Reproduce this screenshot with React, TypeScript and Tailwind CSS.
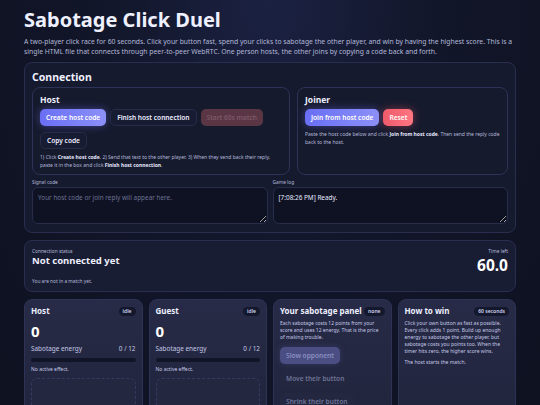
import type { ReactNode } from 'react';

const font = { fontFamily: '"Noto Sans", "Open Sans", sans-serif' };

function Pill({ children }: { children: ReactNode }) {
  return (
    <span className="rounded-full bg-[#14182c] px-[4px] py-[1px] text-[5px] font-semibold leading-[7px] text-[#d3d6f2]">
      {children}
    </span>
  );
}

function PlayerCard({ name }: { name: string }) {
  return (
    <div className="flex h-[120px] flex-col rounded-lg border border-[#2e3355] bg-gradient-to-b from-[#272b47] to-[#20243c] px-[6px] pt-[6px]">
      <div className="flex h-[10px] items-center justify-between">
        <span className="text-[8px] font-bold leading-[10px] text-[#eef0ff]">{name}</span>
        <Pill>idle</Pill>
      </div>
      <div className="mt-[6px] text-[15px] font-bold leading-[18px] text-white">0</div>
      <div className="mt-[4px] flex items-center justify-between text-[6.4px] leading-[9px] text-[#c4c8e6]">
        <span>Sabotage energy</span>
        <span>0 / 12</span>
      </div>
      <div className="mt-[5px] h-[4px] rounded-full bg-[#121527]" />
      <div className="mt-[4px] text-[5px] leading-[7px] text-[#c4c8e6]">No active effect.</div>
      <div className="mt-[5px] h-[40px] rounded-md border border-dashed border-[#353a5e] bg-[#23273f]" />
    </div>
  );
}

export default function App() {
  return (
    <div
      style={font}
      className="min-h-screen bg-[radial-gradient(ellipse_at_50%_0%,#1b2142_0%,#121629_45%,#0e1120_100%)] px-6 pt-[8px] text-[#e8eaff]"
    >
      <h1 className="text-[20px] font-bold leading-[24px] text-[#eef0ff]">Sabotage Click Duel</h1>
      <p className="mt-[5px] text-[6.8px] leading-[10px] text-[#b3b8d8]">
        A two-player click race for 60 seconds. Click your button fast, spend your clicks to sabotage the other player, and win by having the
        highest score. This is a single HTML file that connects through peer-to-peer WebRTC. One person hosts, the other joins by copying a code
        back and forth.
      </p>

      {/* Connection */}
      <div className="mt-[5px] rounded-lg border border-[#292e4f] bg-[#161a2e] px-[7px] pb-[8px] pt-[6px]">
        <h2 className="text-[10.5px] font-bold leading-[16px] text-[#eef0ff]">Connection</h2>
        <div className="mt-[2px] grid grid-cols-[258fr_211fr] gap-[7px]">
          <div className="rounded-lg border border-[#2d3257] bg-[#161a2d] px-[7px] pb-[5px] pt-[5px]">
            <div className="text-[8.5px] font-bold leading-[14px] text-[#eef0ff]">Host</div>
            <div className="mt-[2px] flex flex-wrap gap-x-[4px] gap-y-[6px]">
              <button className="h-[17px] rounded-[5px] bg-gradient-to-r from-[#6a6ef4] to-[#8c90f8] px-[6px] text-[6.6px] font-semibold text-white shadow-[0_0_8px_rgba(110,115,245,0.45)]">
                Create host code
              </button>
              <button className="h-[17px] rounded-[5px] border border-[#262b48] bg-[#181c33] px-[6px] text-[6.6px] font-semibold text-[#eceeff]">
                Finish host connection
              </button>
              <button className="h-[17px] rounded-[5px] bg-[#5a3645] px-[6px] text-[6.6px] font-semibold text-[#7d5866]">
                Start 60s match
              </button>
              <button className="h-[17px] rounded-[5px] border border-[#262b48] bg-[#181c33] px-[6px] text-[6.6px] font-semibold text-[#eceeff]">
                Copy code
              </button>
            </div>
            <p className="mt-[4px] text-[5px] leading-[8px] text-[#b3b8d8]">
              1) Click <b className="text-[#e8eaff]">Create host code</b>. 2) Send that text to the other player. 3) When they send back their
              reply, paste it in the box and click <b className="text-[#e8eaff]">Finish host connection</b>.
            </p>
          </div>
          <div className="rounded-lg border border-[#2d3257] bg-[#161a2d] px-[7px] pt-[5px]">
            <div className="text-[8.5px] font-bold leading-[14px] text-[#eef0ff]">Joiner</div>
            <div className="mt-[2px] flex gap-[4px]">
              <button className="h-[17px] rounded-[5px] bg-gradient-to-r from-[#6a6ef4] to-[#8c90f8] px-[6px] text-[6.6px] font-semibold text-white shadow-[0_0_8px_rgba(110,115,245,0.45)]">
                Join from host code
              </button>
              <button className="h-[17px] rounded-[5px] bg-gradient-to-r from-[#ef5a6a] to-[#ff7683] px-[6px] text-[6.6px] font-semibold text-white shadow-[0_0_8px_rgba(240,90,105,0.45)]">
                Reset
              </button>
            </div>
            <p className="mt-[4px] text-[5px] leading-[8px] text-[#b3b8d8]">
              Paste the host code below and click <b className="text-[#e8eaff]">Join from host code</b>. Then send the reply code back to the host.
            </p>
          </div>
        </div>
        <div className="mt-[3px] grid grid-cols-2 gap-[5px]">
          <label className="flex flex-col">
            <span className="text-[4.8px] leading-[9px] text-[#b3b8d8]">Signal code</span>
            <textarea
              readOnly
              placeholder="Your host code or join reply will appear here."
              className="h-[37px] resize-y rounded-md border border-[#282d4c] bg-[#0f1222] px-[5px] py-[5px] text-[6.4px] leading-[9px] text-[#e8eaff] outline-none placeholder:text-[#6c7194]"
            />
          </label>
          <label className="flex flex-col">
            <span className="text-[4.8px] leading-[9px] text-[#b3b8d8]">Game log</span>
            <textarea
              readOnly
              value="[7:08:26 PM] Ready."
              className="h-[37px] resize-y rounded-md border border-[#282d4c] bg-[#0f1222] px-[5px] py-[5px] text-[6.4px] leading-[9px] text-[#e8eaff] outline-none"
            />
          </label>
        </div>
      </div>

      {/* Status */}
      <div className="mt-[7px] flex items-start justify-between rounded-lg border border-[#292e4f] bg-[#191d33] px-[7px] pb-[6px] pt-[6px]">
        <div>
          <div className="text-[4.8px] leading-[8px] text-[#b3b8d8]">Connection status</div>
          <div className="text-[9.5px] font-bold leading-[12px] text-[#eef0ff]">Not connected yet</div>
          <div className="mt-[10px] text-[4.8px] leading-[8px] text-[#b3b8d8]">You are not in a match yet.</div>
        </div>
        <div className="text-right">
          <div className="text-[4.8px] leading-[8px] text-[#b3b8d8]">Time left</div>
          <div className="text-[15.5px] font-bold leading-[20px] text-white">60.0</div>
        </div>
      </div>

      {/* Cards */}
      <div className="mt-[7px] grid grid-cols-4 gap-[6px]">
        <PlayerCard name="Host" />
        <PlayerCard name="Guest" />
        <div className="flex h-[120px] flex-col rounded-lg border border-[#2e3355] bg-gradient-to-b from-[#272b47] to-[#20243c] px-[6px] pt-[6px]">
          <div className="flex h-[10px] items-center justify-between">
            <span className="text-[8px] font-bold leading-[10px] text-[#eef0ff]">Your sabotage panel</span>
            <Pill>none</Pill>
          </div>
          <p className="mt-[4px] pr-[5px] text-[4.96px] leading-[7px] text-[#c4c8e6]">
            Each sabotage costs 12 points from your score and uses 12 energy. That is the price of making trouble.
          </p>
          <div className="mt-[6px] flex flex-col items-start gap-[6px]">
            <button className="h-[17px] rounded-[5px] bg-[#4a4e83] px-[6px] text-[6.6px] font-semibold text-[#8b8fc0] shadow-[0_0_6px_rgba(90,95,160,0.35)]">
              Slow opponent
            </button>
            <button className="h-[17px] rounded-[5px] bg-[#23273f] px-[6px] text-[6.6px] font-semibold text-[#6e7398]">
              Move their button
            </button>
            <button className="h-[17px] rounded-[5px] bg-[#23273f] px-[6px] text-[6.6px] font-semibold text-[#6e7398]">
              Shrink their button
            </button>
          </div>
        </div>
        <div className="flex h-[120px] flex-col rounded-lg border border-[#2e3355] bg-gradient-to-b from-[#272b47] to-[#20243c] px-[6px] pt-[6px]">
          <div className="flex h-[10px] items-center justify-between">
            <span className="text-[8px] font-bold leading-[10px] text-[#eef0ff]">How to win</span>
            <Pill>60 seconds</Pill>
          </div>
          <p className="mt-[4px] text-[5px] leading-[7px] text-[#c4c8e6]">
            Click your own button as fast as possible. Every click adds 1 point. Build up enough energy to sabotage the other player, but sabotage
            costs you points too. When the timer hits zero, the higher score wins.
          </p>
          <p className="mt-[4px] text-[5px] leading-[7px] text-[#c4c8e6]">The host starts the match.</p>
        </div>
      </div>
    </div>
  );
}
